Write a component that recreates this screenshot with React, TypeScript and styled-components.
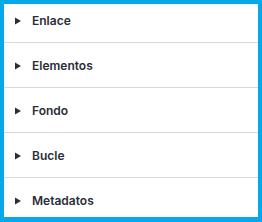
import React from 'react';
import styled, { createGlobalStyle } from 'styled-components';

const sections = ['Enlace', 'Elementos', 'Fondo', 'Bucle', 'Metadatos'];

const App: React.FC = () => {
  return (
    <>
      <GlobalStyle />
      <Panel>
        {sections.map(name => (
          <Row key={name}>
            <Caret viewBox="0 0 6 8" aria-hidden>
              <path d="M0 0.5 L6 4 L0 7.5 Z" fill="currentColor" />
            </Caret>
            <Label>{name}</Label>
          </Row>
        ))}
      </Panel>
      <Frame />
    </>
  );
};

const GlobalStyle = createGlobalStyle`
  html, body {
    margin: 0;
    padding: 0;
    background: #ffffff;
    overflow: hidden;
  }
  body {
    font-family: Inter, "Liberation Sans", sans-serif;
  }
`;

const Panel = styled.div`
  width: 262px;
  height: 222px;
  display: flex;
  flex-direction: column;
  margin-top: -2px;
`;

const Row = styled.div`
  height: 44px;
  flex: 0 0 44px;
  display: flex;
  align-items: center;
  gap: 11px;
  padding-left: 15px;
  border-bottom: 1px solid #d6d9e3;
  color: #2a2e37;

  &:last-child {
    border-bottom: none;
  }
`;

const Caret = styled.svg`
  width: 6px;
  height: 8px;
  color: #2a2e37;
  margin-top: 1px;
`;

const Label = styled.span`
  font-size: 12px;
  font-weight: 600;
`;

const Frame = styled.div`
  position: fixed;
  inset: 0;
  border-style: solid;
  border-color: #05a8ea;
  border-width: 4px 4px 5px 4px;
  pointer-events: none;
`;

export default App;
